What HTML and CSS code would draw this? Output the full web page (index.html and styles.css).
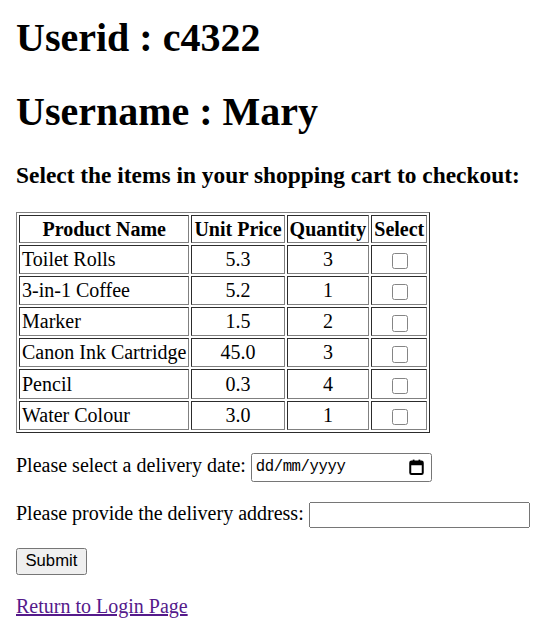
FILE: index.html
```html
<!DOCTYPE html>
<html>
<head>
<meta charset="utf-8">
<link rel="stylesheet" href="styles.css">
</head>
<body>
<h1>Userid : c4322</h1>
<h1>Username : Mary</h1>
<h3>Select the items in your shopping cart to checkout:</h3>
<form>
<table class="cart" border="1">
<tr><th>Product Name</th><th>Unit Price</th><th>Quantity</th><th>Select</th></tr>
<tr><td>Toilet Rolls</td><td class="c">5.3</td><td class="c">3</td><td class="c"><input type="checkbox" class="chk"></td></tr>
<tr><td>3-in-1 Coffee</td><td class="c">5.2</td><td class="c">1</td><td class="c"><input type="checkbox" class="chk"></td></tr>
<tr><td>Marker</td><td class="c">1.5</td><td class="c">2</td><td class="c"><input type="checkbox" class="chk"></td></tr>
<tr><td>Canon Ink Cartridge</td><td class="c">45.0</td><td class="c">3</td><td class="c"><input type="checkbox" class="chk"></td></tr>
<tr><td>Pencil</td><td class="c">0.3</td><td class="c">4</td><td class="c"><input type="checkbox" class="chk"></td></tr>
<tr><td>Water Colour</td><td class="c">3.0</td><td class="c">1</td><td class="c"><input type="checkbox" class="chk"></td></tr>
</table>
<p>Please select a delivery date: <span class="date"><span class="date-text">dd/mm/yyyy</span><svg class="cal" width="12" height="13" viewBox="0 0 12 13"><rect x="1" y="2" width="10" height="10" rx="1" fill="none" stroke="#000" stroke-width="1.6"/><rect x="1" y="2" width="10" height="3" fill="#000"/><rect x="3" y="0.5" width="1.4" height="2.5" fill="#000"/><rect x="7.6" y="0.5" width="1.4" height="2.5" fill="#000"/></svg></span></p>
<p>Please provide the delivery address: <input type="text" class="addr"></p>
<p><input type="submit" value="Submit" class="submit"></p>
</form>
<p><a href="#" class="back">Return to Login Page</a></p>
</body>
</html>
```

FILE: styles.css
```css
html { zoom: 1.25; }
body {
  font-family: "Liberation Serif", "Times New Roman", serif;
  margin: 0 8px 8px 12.8px;
}
h1:first-child { margin-top: 11.5px; }
.cart th, .cart td { padding: 1px 1.6px; }
.cart td.c { text-align: center; }
.chk {
  -webkit-appearance: none;
  appearance: none;
  box-sizing: border-box;
  width: 13px;
  height: 13px;
  margin: 3px 4px 2px 5px;
  border: 1px solid #858585;
  border-radius: 2px;
  background: #fff;
  vertical-align: middle;
}
.date {
  display: inline-flex;
  align-items: center;
  justify-content: space-between;
  box-sizing: border-box;
  width: 145px;
  height: 23px;
  padding: 0 6px 0 3px;
  border: 1px solid #767676;
  border-radius: 2px;
  vertical-align: middle;
  font-family: "Liberation Mono", "DejaVu Sans Mono", monospace;
  font-size: 12.5px;
  letter-spacing: -0.3px;
}
.date-text { color: #000; }
.cal { display: block; }
.addr { width: 170px; }
.submit { font-family: "Liberation Sans", Arial, sans-serif; }
.back { color: #551a8b; }
```
